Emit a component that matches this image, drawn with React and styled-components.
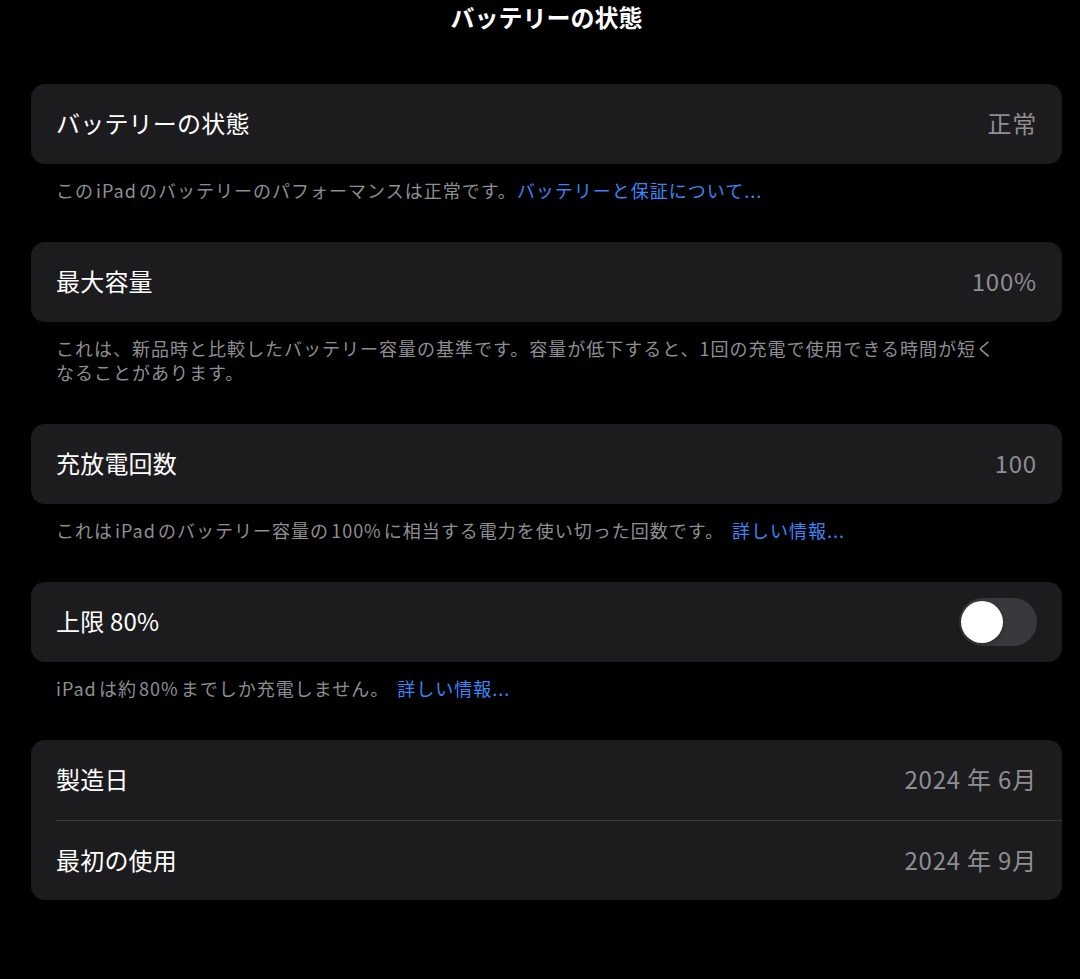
import React from "react";
import styled, { createGlobalStyle } from "styled-components";

const GlobalStyle = createGlobalStyle`
  body {
    margin: 0;
    background: #000;
    font-family: "Noto Sans CJK JP", "Noto Sans", sans-serif;
    -webkit-font-smoothing: antialiased;
  }
`;

const Page = styled.div`
  min-height: 979px;
  background: #000;
  padding: 0 18px 0 31px;
  box-sizing: border-box;
`;

const Title = styled.h1`
  margin: 0 0 50px;
  height: 34px;
  line-height: 34px;
  font-size: 24px;
  font-weight: 700;
  color: #fff;
  text-align: center;
`;

const Card = styled.div`
  background: #1c1c1e;
  border-radius: 14px;
  overflow: hidden;
`;

const Row = styled.div`
  height: 80px;
  padding: 0 25px;
  display: flex;
  align-items: center;
  justify-content: space-between;

  & + & {
    border-top: 1px solid #3a3a3c;
    margin-left: 25px;
    padding-left: 0;
    height: 79px;
  }
`;

const Label = styled.span`
  font-size: 24px;
  color: #fff;
  letter-spacing: 0.2px;
  margin-top: -3px;
`;

const Value = styled.span`
  font-size: 24px;
  color: #8e8e93;
  letter-spacing: 0.8px;
  margin-top: -3px;
`;

const Footer = styled.p`
  margin: 0 0 40px;
  padding: 14px 25px 0;
  font-size: 18px;
  line-height: 24px;
  color: #8e8e93;
  letter-spacing: 1px;
`;

const Link = styled.span`
  color: #3a86f7;
  margin-left: ${(p) => (p.$gap ? "8px" : "0")};
`;

const Track = styled.div`
  position: relative;
  width: 78px;
  height: 48px;
  border-radius: 24px;
  background: #39393d;
`;

const Knob = styled.div`
  position: absolute;
  top: 3px;
  left: 2px;
  width: 42px;
  height: 42px;
  border-radius: 50%;
  background: #fff;
  box-shadow: 0 1px 4px rgba(0, 0, 0, 0.35);
`;

const Toggle = () => (
  <Track>
    <Knob />
  </Track>
);

const hs = "\u200A";

export default function App() {
  return (
    <>
      <GlobalStyle />
      <Page>
        <Title>バッテリーの状態</Title>

        <Card>
          <Row>
            <Label>バッテリーの状態</Label>
            <Value>正常</Value>
          </Row>
        </Card>
        <Footer>
          {`この${hs}iPad${hs}のバッテリーのパフォーマンスは正常です。`}
          <Link>バッテリーと保証について...</Link>
        </Footer>

        <Card>
          <Row>
            <Label>最大容量</Label>
            <Value>100%</Value>
          </Row>
        </Card>
        <Footer>
          これは、新品時と比較したバッテリー容量の基準です。容量が低下すると、1回の充電で使用できる時間が短く
          <br />
          なることがあります。
        </Footer>

        <Card>
          <Row>
            <Label>充放電回数</Label>
            <Value>100</Value>
          </Row>
        </Card>
        <Footer>
          {`これは${hs}iPad${hs}のバッテリー容量の${hs}100%${hs}に相当する電力を使い切った回数です。`}
          <Link $gap>詳しい情報...</Link>
        </Footer>

        <Card>
          <Row>
            <Label>上限 80%</Label>
            <Toggle />
          </Row>
        </Card>
        <Footer>
          {`iPad${hs}は約${hs}80%${hs}までしか充電しません。`}
          <Link $gap>詳しい情報...</Link>
        </Footer>

        <Card>
          <Row>
            <Label>製造日</Label>
            <Value>2024 年 6月</Value>
          </Row>
          <Row>
            <Label>最初の使用</Label>
            <Value>2024 年 9月</Value>
          </Row>
        </Card>
      </Page>
    </>
  );
}
